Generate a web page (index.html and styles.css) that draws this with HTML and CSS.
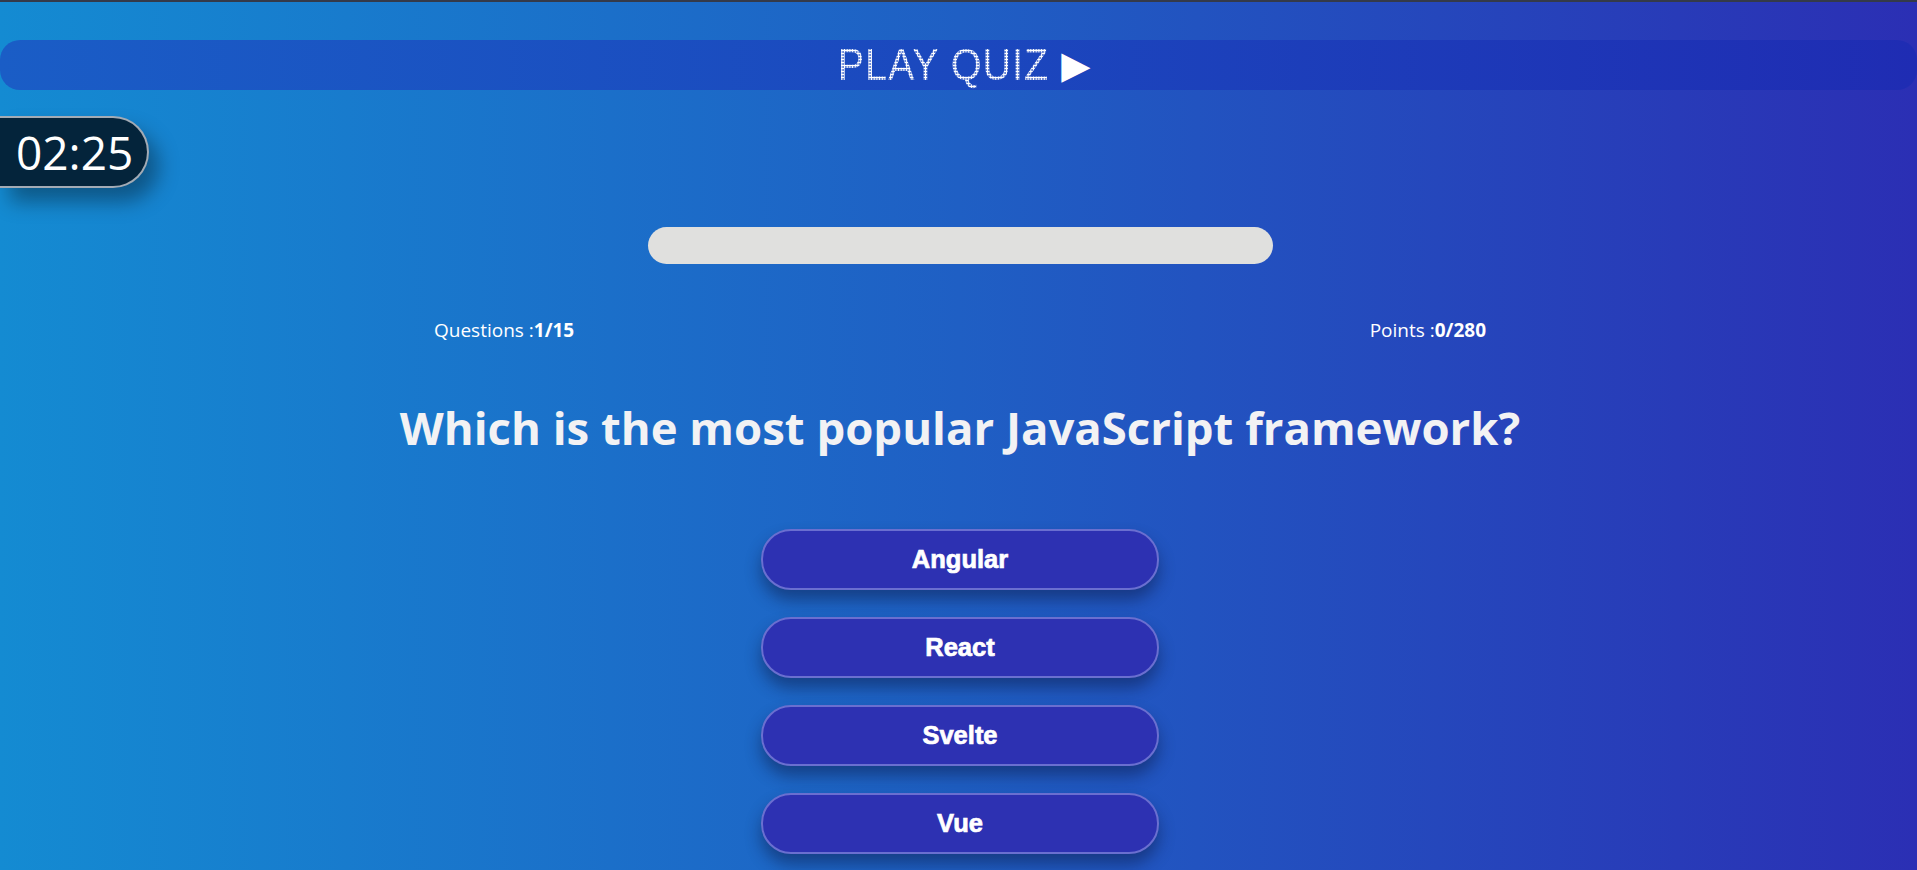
FILE: index.html
```html
<!DOCTYPE html>
<html lang="en">
<head>
<meta charset="utf-8">
<title>Play Quiz</title>
<link rel="stylesheet" href="styles.css">
</head>
<body>
<div class="page">
  <header class="topbar">
    <span class="title">PLAY QUIZ</span>
    <span class="play">&#9654;</span>
  </header>
  <div class="timer">02:25</div>
  <main class="quiz">
    <div class="progress"></div>
    <div class="stats">
      <span>Questions :<b>1/15</b></span>
      <span>Points :<b>0/280</b></span>
    </div>
    <h1 class="question">Which is the most popular JavaScript framework?</h1>
    <div class="answers">
      <button class="answer">Angular</button>
      <button class="answer">React</button>
      <button class="answer">Svelte</button>
      <button class="answer">Vue</button>
    </div>
  </main>
</div>
</body>
</html>
```

FILE: styles.css
```css
html, body {
  margin: 0;
  padding: 0;
  height: 100%;
  overflow: hidden;
}
body {
  background: linear-gradient(to right, #148bd2 0%, #1f5fc4 50%, #2b2fb4 100%);
  border-top: 2px solid #343a4a;
  box-sizing: border-box;
  font-family: "Open Sans", "Noto Sans", sans-serif;
  color: #fff;
}
.page {
  display: flex;
  flex-direction: column;
}
.topbar {
  margin-top: 38px;
  height: 50px;
  border-radius: 20px;
  background: linear-gradient(to right, #1a5dc6 0%, #1b48be 50%, #1f2cb3 100%);
  display: flex;
  align-items: center;
  justify-content: center;
  gap: 10px;
}
.title {
  font-family: "Liberation Sans", Arial, sans-serif;
  font-weight: 400;
  font-size: 44px;
  line-height: 50px;
  letter-spacing: 1px;
  color: transparent;
  background: radial-gradient(circle, #ffffff 0 1.1px, rgba(255,255,255,0) 1.6px) 0 0 / 3px 3px;
  -webkit-background-clip: text;
  background-clip: text;
  transform: scaleX(0.9);
  margin-right: -10px;
}
.play {
  font-family: "DejaVu Sans", sans-serif;
  font-size: 38px;
  line-height: 50px;
  color: #fff;
}
.timer {
  margin-top: 26px;
  width: 147px;
  height: 68px;
  background: #04243b;
  border: 2px solid #a3abb5;
  border-left: none;
  border-radius: 0 36px 36px 0;
  font-size: 46px;
  line-height: 68px;
  text-indent: 16px;
  box-shadow: 10px 14px 20px rgba(0, 0, 0, 0.35);
}
.quiz {
  display: flex;
  flex-direction: column;
  align-items: center;
  padding-left: 3px;
}
.progress {
  margin-top: 39px;
  width: 625px;
  height: 37px;
  border-radius: 19px;
  background: #e0e0de;
}
.stats {
  margin-top: 53px;
  width: 1052px;
  display: flex;
  justify-content: space-between;
  font-size: 19px;
  line-height: 26px;
}
.stats b {
  font-weight: 700;
}
.question {
  margin: 54px 0 0;
  font-family: "Open Sans", "Noto Sans", sans-serif;
  font-weight: 700;
  font-size: 45.5px;
  line-height: 60px;
  color: #f2f2f4;
}
.answers {
  margin-top: 72px;
  display: flex;
  flex-direction: column;
  gap: 27px;
}
.answer {
  width: 398px;
  height: 61px;
  border-radius: 30px;
  border: 2px solid #6a6fd0;
  background: #2d31b2;
  color: #fff;
  font-family: "Liberation Sans", Arial, sans-serif;
  font-weight: 700;
  font-size: 25.5px;
  -webkit-text-stroke: 0.7px #fff;
  box-shadow: 0 10px 16px rgba(10, 20, 60, 0.45);
  cursor: pointer;
}
```
